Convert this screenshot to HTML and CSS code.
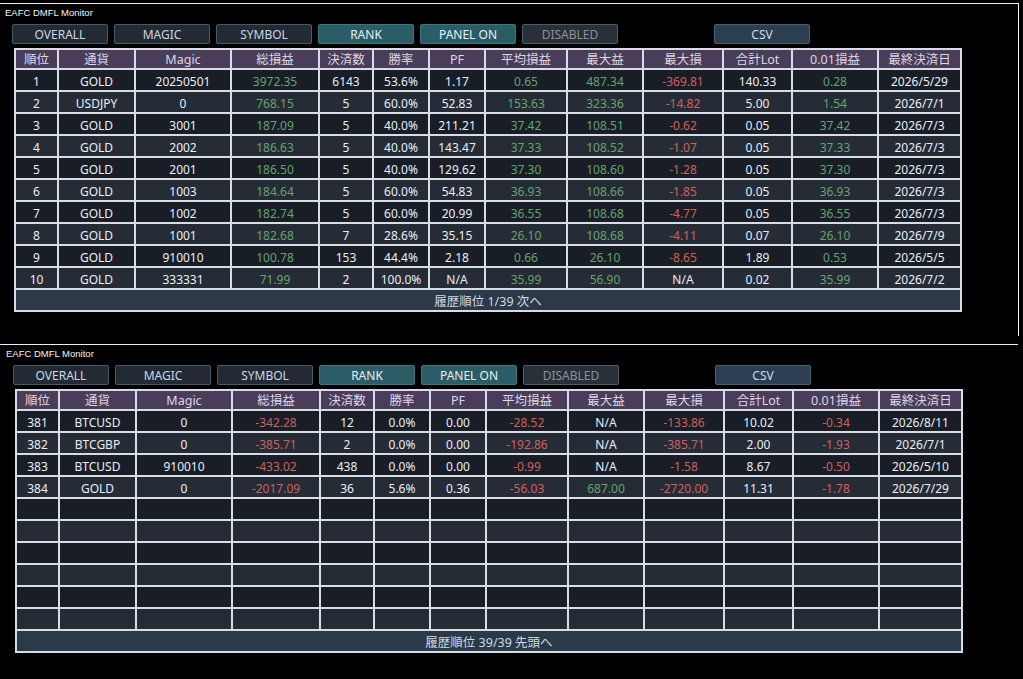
FILE: index.html
```html
<!DOCTYPE html>
<html lang="ja">
<head>
<meta charset="utf-8">
<title>EAFC DMFL Monitor</title>
<link rel="stylesheet" href="styles.css">
</head>
<body>
<section class="panel panel-top">
  <div class="inner">
    <div class="title">EAFC DMFL Monitor</div>
    <div class="toolbar">
      <div class="btn">OVERALL</div>
      <div class="btn">MAGIC</div>
      <div class="btn">SYMBOL</div>
      <div class="btn btn-on">RANK</div>
      <div class="btn btn-on">PANEL ON</div>
      <div class="btn btn-off">DISABLED</div>
      <div class="btn btn-csv">CSV</div>
    </div>
    <table class="grid">
      <colgroup>
        <col class="c1"><col class="c2"><col class="c3"><col class="c4"><col class="c5"><col class="c6"><col class="c7"><col class="c8"><col class="c9"><col class="c10"><col class="c11"><col class="c12"><col class="c13">
      </colgroup>
      <thead>
        <tr><th>順位</th><th>通貨</th><th>Magic</th><th>総損益</th><th>決済数</th><th>勝率</th><th>PF</th><th>平均損益</th><th>最大益</th><th>最大損</th><th>合計Lot</th><th>0.01損益</th><th>最終決済日</th></tr>
      </thead>
      <tbody>
        <tr><td>1</td><td>GOLD</td><td>20250501</td><td class="g">3972.35</td><td>6143</td><td>53.6%</td><td>1.17</td><td class="g">0.65</td><td class="g">487.34</td><td class="r">-369.81</td><td>140.33</td><td class="g">0.28</td><td>2026/5/29</td></tr>
        <tr><td>2</td><td>USDJPY</td><td>0</td><td class="g">768.15</td><td>5</td><td>60.0%</td><td>52.83</td><td class="g">153.63</td><td class="g">323.36</td><td class="r">-14.82</td><td>5.00</td><td class="g">1.54</td><td>2026/7/1</td></tr>
        <tr><td>3</td><td>GOLD</td><td>3001</td><td class="g">187.09</td><td>5</td><td>40.0%</td><td>211.21</td><td class="g">37.42</td><td class="g">108.51</td><td class="r">-0.62</td><td>0.05</td><td class="g">37.42</td><td>2026/7/3</td></tr>
        <tr><td>4</td><td>GOLD</td><td>2002</td><td class="g">186.63</td><td>5</td><td>40.0%</td><td>143.47</td><td class="g">37.33</td><td class="g">108.52</td><td class="r">-1.07</td><td>0.05</td><td class="g">37.33</td><td>2026/7/3</td></tr>
        <tr><td>5</td><td>GOLD</td><td>2001</td><td class="g">186.50</td><td>5</td><td>40.0%</td><td>129.62</td><td class="g">37.30</td><td class="g">108.60</td><td class="r">-1.28</td><td>0.05</td><td class="g">37.30</td><td>2026/7/3</td></tr>
        <tr><td>6</td><td>GOLD</td><td>1003</td><td class="g">184.64</td><td>5</td><td>60.0%</td><td>54.83</td><td class="g">36.93</td><td class="g">108.66</td><td class="r">-1.85</td><td>0.05</td><td class="g">36.93</td><td>2026/7/3</td></tr>
        <tr><td>7</td><td>GOLD</td><td>1002</td><td class="g">182.74</td><td>5</td><td>60.0%</td><td>20.99</td><td class="g">36.55</td><td class="g">108.68</td><td class="r">-4.77</td><td>0.05</td><td class="g">36.55</td><td>2026/7/3</td></tr>
        <tr><td>8</td><td>GOLD</td><td>1001</td><td class="g">182.68</td><td>7</td><td>28.6%</td><td>35.15</td><td class="g">26.10</td><td class="g">108.68</td><td class="r">-4.11</td><td>0.07</td><td class="g">26.10</td><td>2026/7/9</td></tr>
        <tr><td>9</td><td>GOLD</td><td>910010</td><td class="g">100.78</td><td>153</td><td>44.4%</td><td>2.18</td><td class="g">0.66</td><td class="g">26.10</td><td class="r">-8.65</td><td>1.89</td><td class="g">0.53</td><td>2026/5/5</td></tr>
        <tr><td>10</td><td>GOLD</td><td>333331</td><td class="g">71.99</td><td>2</td><td>100.0%</td><td>N/A</td><td class="g">35.99</td><td class="g">56.90</td><td>N/A</td><td>0.02</td><td class="g">35.99</td><td>2026/7/2</td></tr>
      </tbody>
      <tfoot>
        <tr><td colspan="13">履歴順位 1/39 次へ</td></tr>
      </tfoot>
    </table>
  </div>
</section>

<section class="panel panel-bottom">
  <div class="inner shifted">
    <div class="title">EAFC DMFL Monitor</div>
    <div class="toolbar">
      <div class="btn">OVERALL</div>
      <div class="btn">MAGIC</div>
      <div class="btn">SYMBOL</div>
      <div class="btn btn-on">RANK</div>
      <div class="btn btn-on">PANEL ON</div>
      <div class="btn btn-off">DISABLED</div>
      <div class="btn btn-csv">CSV</div>
    </div>
    <table class="grid">
      <colgroup>
        <col class="c1"><col class="c2"><col class="c3"><col class="c4"><col class="c5"><col class="c6"><col class="c7"><col class="c8"><col class="c9"><col class="c10"><col class="c11"><col class="c12"><col class="c13">
      </colgroup>
      <thead>
        <tr><th>順位</th><th>通貨</th><th>Magic</th><th>総損益</th><th>決済数</th><th>勝率</th><th>PF</th><th>平均損益</th><th>最大益</th><th>最大損</th><th>合計Lot</th><th>0.01損益</th><th>最終決済日</th></tr>
      </thead>
      <tbody>
        <tr><td>381</td><td>BTCUSD</td><td>0</td><td class="r">-342.28</td><td>12</td><td>0.0%</td><td>0.00</td><td class="r">-28.52</td><td>N/A</td><td class="r">-133.86</td><td>10.02</td><td class="r">-0.34</td><td>2026/8/11</td></tr>
        <tr><td>382</td><td>BTCGBP</td><td>0</td><td class="r">-385.71</td><td>2</td><td>0.0%</td><td>0.00</td><td class="r">-192.86</td><td>N/A</td><td class="r">-385.71</td><td>2.00</td><td class="r">-1.93</td><td>2026/7/1</td></tr>
        <tr><td>383</td><td>BTCUSD</td><td>910010</td><td class="r">-433.02</td><td>438</td><td>0.0%</td><td>0.00</td><td class="r">-0.99</td><td>N/A</td><td class="r">-1.58</td><td>8.67</td><td class="r">-0.50</td><td>2026/5/10</td></tr>
        <tr><td>384</td><td>GOLD</td><td>0</td><td class="r">-2017.09</td><td>36</td><td>5.6%</td><td>0.36</td><td class="r">-56.03</td><td class="g">687.00</td><td class="r">-2720.00</td><td>11.31</td><td class="r">-1.78</td><td>2026/7/29</td></tr>
        <tr><td></td><td></td><td></td><td></td><td></td><td></td><td></td><td></td><td></td><td></td><td></td><td></td><td></td></tr>
        <tr><td></td><td></td><td></td><td></td><td></td><td></td><td></td><td></td><td></td><td></td><td></td><td></td><td></td></tr>
        <tr><td></td><td></td><td></td><td></td><td></td><td></td><td></td><td></td><td></td><td></td><td></td><td></td><td></td></tr>
        <tr><td></td><td></td><td></td><td></td><td></td><td></td><td></td><td></td><td></td><td></td><td></td><td></td><td></td></tr>
        <tr><td></td><td></td><td></td><td></td><td></td><td></td><td></td><td></td><td></td><td></td><td></td><td></td><td></td></tr>
        <tr><td></td><td></td><td></td><td></td><td></td><td></td><td></td><td></td><td></td><td></td><td></td><td></td><td></td></tr>
      </tbody>
      <tfoot>
        <tr><td colspan="13">履歴順位 39/39 先頭へ</td></tr>
      </tfoot>
    </table>
  </div>
</section>
</body>
</html>
```

FILE: styles.css
```css
html, body {
  margin: 0;
  padding: 0;
  background: #000;
}

body {
  font-family: "Noto Sans", "Noto Sans CJK JP", sans-serif;
  color: #e6edf5;
}

.panel {
  width: 1018px;
  border-top: 1px solid #ededed;
}

.panel-top {
  margin-top: 3px;
  height: 332px;
  border-right: 1px solid #ededed;
}

.panel-bottom {
  margin-top: 8px;
}

.inner.shifted {
  padding-left: 1px;
}

.title {
  height: 20px;
  line-height: 18px;
  padding-left: 5px;
  font-family: "Liberation Sans", "Noto Sans CJK JP", sans-serif;
  font-size: 9.5px;
  color: #f4f4f4;
}

.toolbar {
  display: flex;
  gap: 6px;
  padding-left: 12px;
  height: 20px;
}

.btn {
  width: 96px;
  height: 20px;
  box-sizing: border-box;
  padding-top: 2px;
  border: 1px solid #3e5f69;
  border-radius: 2px;
  background: #232a34;
  color: #c9d8e6;
  font-size: 12px;
  line-height: 16px;
  text-align: center;
}

.btn-on {
  background: #2a5d66;
  border-color: #3c7680;
  color: #e6f0f4;
}

.btn-off {
  background: #2a3037;
  border-color: #46606a;
  color: #8b939a;
}

.btn-csv {
  margin-left: 90px;
  background: #2c3e52;
  border-color: #40656e;
  color: #cfdbe6;
}

.grid {
  margin: 4px 0 0 14px;
  width: 948px;
  table-layout: fixed;
  border-collapse: separate;
  border-spacing: 2px;
  background: #d8dce3;
  font-size: 12px;
}

.c1 { width: 41px; }
.c2 { width: 75px; }
.c3 { width: 94px; }
.c4 { width: 86px; }
.c5 { width: 52px; }
.c6 { width: 54px; }
.c7 { width: 54px; }
.c8 { width: 80px; }
.c9 { width: 74px; }
.c10 { width: 78px; }
.c11 { width: 67px; }
.c12 { width: 84px; }
.c13 { width: 81px; }

.grid th,
.grid td {
  padding: 0;
  text-align: center;
  white-space: nowrap;
  overflow: hidden;
  font-weight: normal;
}

.grid th {
  box-sizing: border-box;
  height: 18px;
  padding-top: 1px;
  line-height: 17px;
  font-size: 12.5px;
  background: #4a3d59;
  color: #ddd7e6;
}

.grid tbody td {
  box-sizing: border-box;
  height: 20px;
  padding-top: 3px;
  line-height: 17px;
  background: #191e26;
  color: #e8eef6;
}

.grid tbody tr:nth-child(even) td {
  background: #262c36;
}

.grid tbody td.g {
  color: #65a36f;
}

.grid tbody td.r {
  color: #d0605a;
}

.grid tfoot td {
  box-sizing: border-box;
  height: 20px;
  padding-top: 3px;
  line-height: 17px;
  font-size: 12.5px;
  background: #2b3a48;
  color: #cfd9e3;
}
```
